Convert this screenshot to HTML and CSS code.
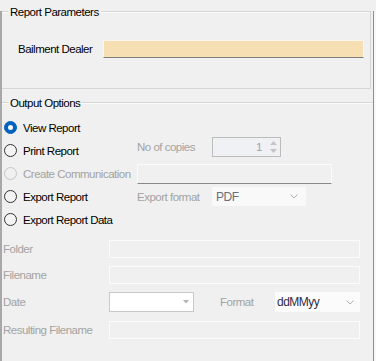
FILE: index.html
```html
<!DOCTYPE html>
<html>
<head>
<meta charset="utf-8">
<link rel="stylesheet" href="styles.css">
</head>
<body>
<div class="frame">
  <div class="group group-params">
    <div class="gtitle">Report Parameters</div>
    <div class="field-row">
      <span class="field-label">Bailment Dealer</span>
      <div class="dealer-input"></div>
    </div>
  </div>

  <div class="group group-output">
    <div class="gtitle">Output Options</div>
    <div class="options">
      <label class="radio"><span class="dot checked"></span><span>View Report</span></label>
      <span></span><span></span>

      <label class="radio"><span class="dot"></span><span>Print Report</span></label>
      <span class="dim lift">No of copies</span>
      <div class="spin lift">
        <span class="spin-val">1</span>
        <span class="spin-btns">
          <svg width="7" height="4" viewBox="0 0 7 4"><path d="M0 4 L3.5 0 L7 4 Z" fill="#c4c4c4"/></svg>
          <svg width="7" height="4" viewBox="0 0 7 4"><path d="M0 0 L3.5 4 L7 0 Z" fill="#c4c4c4"/></svg>
        </span>
      </div>

      <label class="radio disabled"><span class="dot"></span><span>Create Communication</span></label>
      <div class="comm-box"></div>

      <label class="radio"><span class="dot"></span><span>Export Report</span></label>
      <span class="dim">Export format</span>
      <div class="combo combo-pdf">
        <span class="combo-text pdf">PDF</span>
        <svg width="8" height="5" viewBox="0 0 8 5"><path d="M0.5 0.5 L4 4 L7.5 0.5" stroke="#b0b0b0" fill="none"/></svg>
      </div>

      <label class="radio"><span class="dot"></span><span>Export Report Data</span></label>
      <span></span><span></span>
    </div>

    <div class="files">
      <span class="dim">Folder</span>
      <div class="tbox"></div>

      <span class="dim">Filename</span>
      <div class="tbox"></div>

      <span class="dim">Date</span>
      <div class="date-row">
        <div class="date-box">
          <svg width="6" height="4" viewBox="0 0 6 4"><path d="M0 0 L3 3.5 L6 0 Z" fill="#b4b4b4"/></svg>
        </div>
        <span class="dim fmt-label">Format</span>
        <div class="combo combo-fmt">
          <span class="combo-text fmt">ddMMyy</span>
          <svg width="8" height="5" viewBox="0 0 8 5"><path d="M0.5 0.5 L4 4 L7.5 0.5" stroke="#b0b0b0" fill="none"/></svg>
        </div>
      </div>

      <span class="dim">Resulting Filename</span>
      <div class="tbox"></div>
    </div>
  </div>
</div>
</body>
</html>
```

FILE: styles.css
```css
html, body {
  margin: 0;
  padding: 0;
  background: #f0f0f0;
}

body {
  width: 376px;
  height: 361px;
  overflow: hidden;
  font-family: "Liberation Sans", Arial, sans-serif;
  font-size: 11.5px;
  letter-spacing: -0.5px;
  color: #000;
}

.frame {
  width: 371px;
  height: 361px;
  border-left: 2px solid #a8a8a8;
  border-right: 1px solid #8e8e8e;
  box-shadow: 2px 0 0 #f8f8f8;
}

.group {
  border-top: 1px solid #d6d6d6;
  box-shadow: inset 0 1px 0 #fafafa;
}

.group-params {
  margin-top: 11px;
  margin-right: 2px;
  border-right: 1px solid #d6d6d6;
  border-bottom: 1px solid #d6d6d6;
  padding-bottom: 30px;
}

.group-output {
  margin-top: 13px;
}

.gtitle {
  display: block;
  width: max-content;
  margin: -7px 0 0 6px;
  padding: 0 2px;
  line-height: 14px;
  height: 14px;
  background: #f0f0f0;
}

.field-row {
  display: flex;
  align-items: center;
  margin-top: 21px;
  padding-left: 16px;
}

.field-label {
  width: 85px;
}

.dealer-input {
  width: 261px;
  height: 18px;
  box-sizing: border-box;
  background: #f6dfb3;
  border: 1px solid #fbf6ee;
  border-bottom: 1px solid #7c7c7c;
}

.options {
  display: grid;
  grid-template-columns: 133px 75px 1fr;
  grid-auto-rows: 23px;
  align-items: center;
  margin-top: 6px;
  padding-left: 2px;
}

.radio {
  display: flex;
  align-items: center;
  gap: 6px;
  white-space: nowrap;
}

.dot {
  width: 13px;
  height: 13px;
  box-sizing: border-box;
  border-radius: 50%;
  border: 1px solid #333;
  background: #f4f4f4;
  flex: none;
  display: flex;
  align-items: center;
  justify-content: center;
}

.dot.checked {
  border-color: #0062be;
  background: #0062be;
}

.dot.checked::after {
  content: "";
  width: 5px;
  height: 5px;
  border-radius: 50%;
  background: #fff;
}

.radio.disabled {
  color: #a3a3a3;
}

.radio.disabled .dot {
  border-color: #c6c6c6;
  background: #f0f0f0;
}

.dim {
  color: #a3a3a3;
  white-space: nowrap;
}

.lift {
  margin-bottom: 7px;
}

.spin {
  width: 69px;
  height: 20px;
  box-sizing: border-box;
  border: 1px solid #bcbcbc;
  background: #f0f1f4;
  display: flex;
  align-items: center;
  justify-content: flex-end;
}

.spin-val {
  color: #a3a3a3;
  margin-right: 8px;
}

.spin-btns {
  display: flex;
  flex-direction: column;
  gap: 4px;
  margin-right: 3px;
}

.spin-btns svg {
  display: block;
}

.comm-box {
  grid-column: 2 / 4;
  width: 195px;
  height: 20px;
  box-sizing: border-box;
  border: 1px solid #fbfbfb;
  border-bottom: 1px solid #8a8a8a;
  background: #f0f0f0;
}

.combo {
  height: 19px;
  box-sizing: border-box;
  background: #f9f9f9;
  display: flex;
  align-items: center;
  justify-content: space-between;
  padding: 0 8px 0 4px;
}

.combo svg {
  display: block;
}

.combo-pdf {
  width: 94px;
}

.combo-text.pdf {
  color: #6a6f7c;
  font-size: 12px;
}

.combo-text.fmt {
  color: #2e2e48;
  font-size: 12px;
}

.files {
  display: grid;
  grid-template-columns: 106px 251px;
  grid-template-rows: 18px 18px 20px 18px;
  row-gap: 8px;
  align-items: center;
  margin-top: 9px;
  padding-left: 1px;
}

.files > :nth-child(7),
.files > :nth-child(8) {
  margin-top: 1px;
}

.tbox {
  height: 18px;
  box-sizing: border-box;
  border: 1px solid #fbfbfb;
  background: #f0f0f0;
}

.date-row {
  display: flex;
  align-items: center;
  height: 20px;
}

.date-box {
  width: 85px;
  height: 20px;
  box-sizing: border-box;
  border: 1px solid #c9c9c9;
  background: #fff;
  display: flex;
  align-items: center;
  justify-content: flex-end;
  padding-right: 4px;
}

.fmt-label {
  width: 55px;
  margin-left: 26px;
}

.combo-fmt {
  width: 85px;
  height: 20px;
  background: #fbfbfb;
  padding: 0 6px 0 2px;
}
```
